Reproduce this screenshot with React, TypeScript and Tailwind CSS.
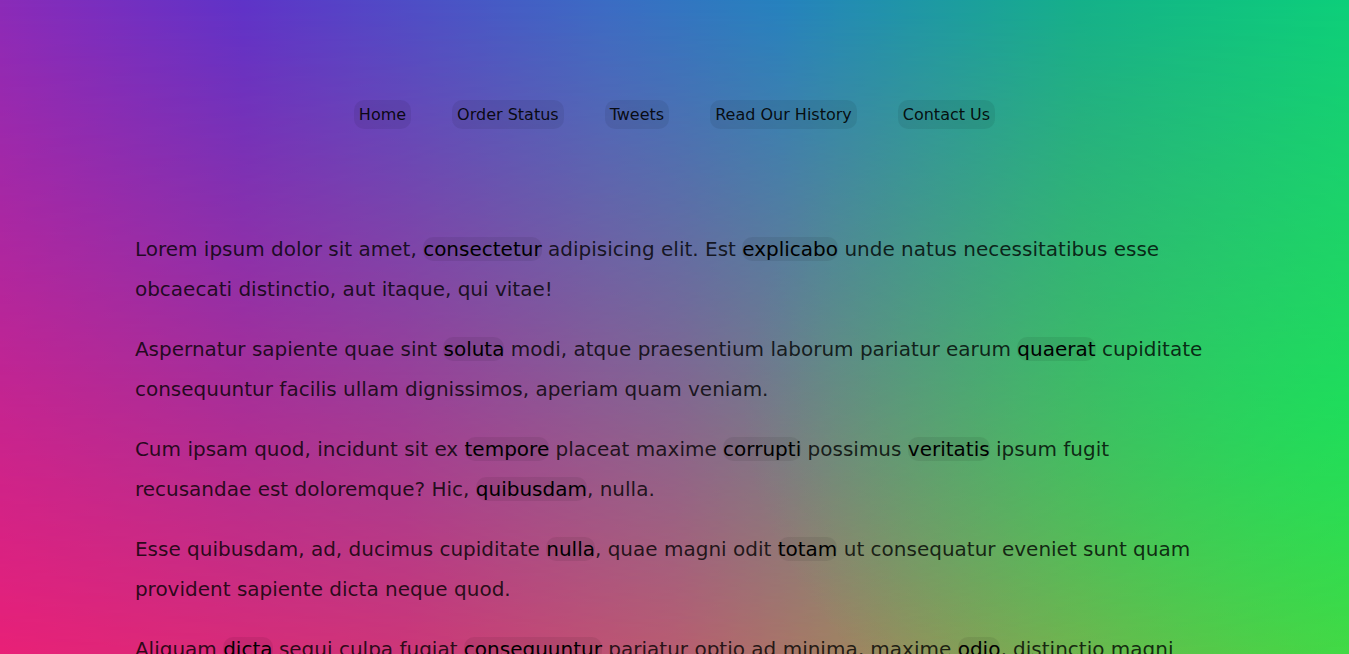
import React from 'react';

const links = ['Home', 'Order Status', 'Tweets', 'Read Our History', 'Contact Us'];

// each paragraph is a list of chunks; strings in [] get the highlighted pill
const paragraphs: (string | [string])[][] = [
  ['Lorem ipsum dolor sit amet, ', ['consectetur'], ' adipisicing elit. Est ', ['explicabo'], ' unde natus necessitatibus esse obcaecati distinctio, aut itaque, qui vitae!'],
  ['Aspernatur sapiente quae sint ', ['soluta'], ' modi, atque praesentium laborum pariatur earum ', ['quaerat'], ' cupiditate consequuntur facilis ullam dignissimos, aperiam quam veniam.'],
  ['Cum ipsam quod, incidunt sit ex ', ['tempore'], ' placeat maxime ', ['corrupti'], ' possimus ', ['veritatis'], ' ipsum fugit recusandae est doloremque? Hic, ', ['quibusdam'], ', nulla.'],
  ['Esse quibusdam, ad, ducimus cupiditate ', ['nulla'], ', quae magni odit ', ['totam'], ' ut consequatur eveniet sunt quam provident sapiente dicta neque quod.'],
  ['Aliquam ', ['dicta'], ' sequi culpa fugiat ', ['consequuntur'], ' pariatur optio ad minima, maxime ', ['odio'], ', distinctio magni voluptates eius sint, fugit ', ['nemo'], ' quo.'],
];

export default function App() {
  return (
    <div className="grid h-screen overflow-hidden font-['DejaVu_Sans',sans-serif] bg-[linear-gradient(to_right,#f41f70_0%,#dc3470_30%,#c85a68_50%,#b0805a_62%,#90a848_80%,#5cd13c_100%)]">
      {/* top row colours fading down over the bottom row */}
      <div className="[grid-area:1/1] bg-[linear-gradient(to_right,#8a2bb8_0%,#5e33c8_18%,#3a6cc4_45%,#2582be_58%,#14b08a_80%,#0ccf7a_100%)] [mask-image:linear-gradient(to_bottom,black_0%,rgba(0,0,0,0.55)_45%,transparent_100%)]" />
      <div className="[grid-area:1/1] bg-[radial-gradient(ellipse_45%_60%_at_100%_55%,rgba(30,240,70,0.75),transparent_100%)]" />
      <div className="relative z-10 [grid-area:1/1] min-w-0">
        <nav className="pt-[100px]">
          <ul className="flex justify-center gap-[41px]">
            {links.map((l) => (
              <li key={l}>
                <a href="#" className="inline-block rounded-[10px] bg-black/[0.07] px-[5px] py-[5px] text-[16px] leading-[19px] text-black/90">
                  {l}
                </a>
              </li>
            ))}
          </ul>
        </nav>
        <main className="mx-auto mt-[100px] w-[80%]">
          {paragraphs.map((p, i) => (
            <p key={i} className="mb-[20px] text-[20px] leading-[40px] text-black/80">
              {p.map((c, j) =>
                typeof c === 'string' ? (
                  <React.Fragment key={j}>{c}</React.Fragment>
                ) : (
                  <span key={j} className="rounded-[10px] bg-black/[0.07] text-black">{c[0]}</span>
                )
              )}
            </p>
          ))}
        </main>
      </div>
    </div>
  );
}
